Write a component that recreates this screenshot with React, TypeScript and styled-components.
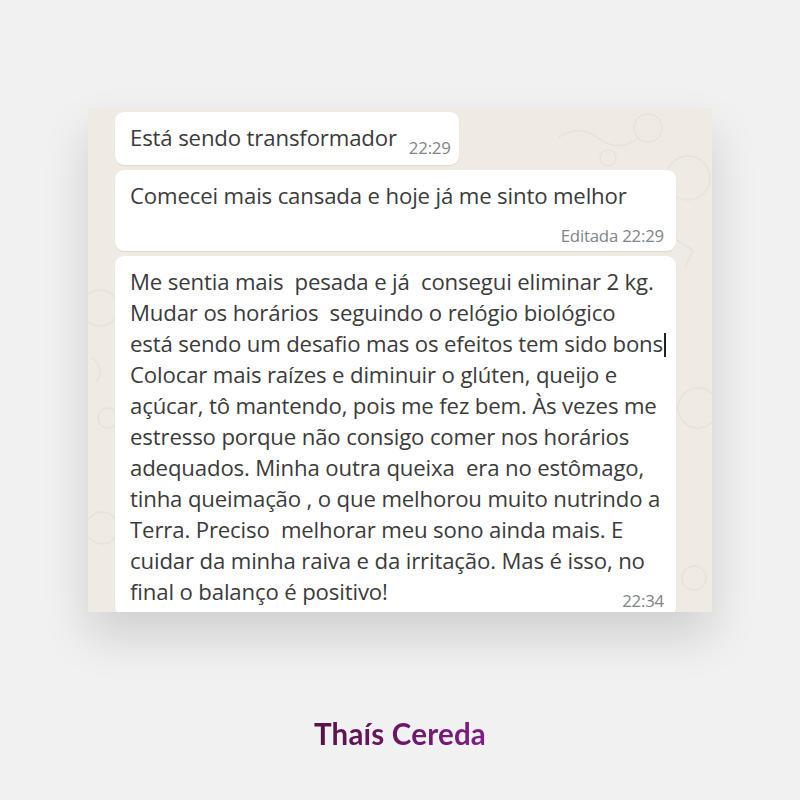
import styled, { createGlobalStyle } from "styled-components";

const GlobalStyle = createGlobalStyle`
  body {
    margin: 0;
    background: #f1f1f1;
  }
`;

const Page = styled.div`
  width: 800px;
  height: 800px;
  display: flex;
  flex-direction: column;
  align-items: center;
  padding-top: 108px;
  box-sizing: border-box;
`;

const ChatPanel = styled.div`
  position: relative;
  width: 624px;
  height: 504px;
  overflow: hidden;
  background: #efeae2;
  box-shadow: 0 24px 44px rgba(0, 0, 0, 0.14);
  box-sizing: border-box;
  padding: 4px 36px 0 27px;
  display: flex;
  flex-direction: column;
  gap: 5px;
`;

const Doodles = styled.svg`
  position: absolute;
  inset: 0;
  width: 100%;
  height: 100%;
  pointer-events: none;
`;

const Bubble = styled.div<{ $fit?: boolean }>`
  position: relative;
  align-self: ${(p) => (p.$fit ? "flex-start" : "stretch")};
  background: #ffffff;
  border-radius: 9px;
  box-shadow: 0 1px 1px rgba(0, 0, 0, 0.08);
  font-family: "Open Sans", "Noto Sans", sans-serif;
  color: #3b3b3b;
`;

const InlineBubble = styled(Bubble)`
  display: flex;
  align-items: flex-end;
  gap: 12px;
  padding: 10px 8px 8px 15px;
`;

const BlockBubble = styled(Bubble)`
  padding: 10px 12px 6px 15px;
`;

const MessageText = styled.p<{ $tail?: number }>`
  margin: 0 0 ${(p) => p.$tail ?? 0}px 0;
  font-size: 22.2px;
  line-height: 31px;
  letter-spacing: -0.15px;
  white-space: nowrap;
`;

const Meta = styled.div<{ $gapTop?: number }>`
  display: flex;
  justify-content: flex-end;
  margin-top: ${(p) => p.$gapTop ?? 0}px;
`;

const Time = styled.span`
  font-family: "Open Sans", "Noto Sans", sans-serif;
  font-size: 16.8px;
  line-height: 18px;
  letter-spacing: -0.2px;
  color: #808487;
  white-space: nowrap;
`;

const Caret = styled.span`
  display: inline-block;
  width: 1.5px;
  height: 24px;
  margin-left: 1px;
  background: #222;
  vertical-align: -5px;
`;

const Name = styled.h2`
  margin: 104px 0 0;
  font-family: Lato, "Open Sans", sans-serif;
  font-weight: 700;
  font-size: 29.5px;
  letter-spacing: 0.2px;
  background: linear-gradient(90deg, #561248 0%, #801c8a 100%);
  -webkit-background-clip: text;
  background-clip: text;
  color: transparent;
`;

const doodleSpots = [
  { x: 560, y: 20, r: 14 },
  { x: 600, y: 70, r: 22 },
  { x: 520, y: 50, r: 8 },
  { x: 12, y: 200, r: 18 },
  { x: 610, y: 300, r: 20 },
  { x: 14, y: 420, r: 16 },
  { x: 606, y: 470, r: 12 },
  { x: 20, y: 310, r: 10 },
];

const App = () => {
  return (
    <>
      <GlobalStyle />
      <Page>
        <ChatPanel>
          <Doodles viewBox="0 0 624 504" preserveAspectRatio="none">
            {doodleSpots.map((d, i) => (
              <circle
                key={i}
                cx={d.x}
                cy={d.y}
                r={d.r}
                fill="none"
                stroke="#e7e2d9"
                strokeWidth="1.5"
              />
            ))}
            <path d="M470 30 q20 -15 40 0 t40 0" fill="none" stroke="#e7e2d9" strokeWidth="1.5" />
            <path d="M585 130 l20 12 l-8 18" fill="none" stroke="#e7e2d9" strokeWidth="1.5" />
            <path d="M4 250 q14 10 4 24" fill="none" stroke="#e7e2d9" strokeWidth="1.5" />
          </Doodles>

          <InlineBubble $fit>
            <MessageText $tail={4}>Está sendo transformador</MessageText>
            <Time>22:29</Time>
          </InlineBubble>

          <BlockBubble>
            <MessageText>Comecei mais cansada e hoje já me sinto melhor</MessageText>
            <Meta $gapTop={16}>
              <Time>Editada 22:29</Time>
            </Meta>
          </BlockBubble>

          <BlockBubble>
            <MessageText>
              Me sentia mais&nbsp; pesada e já&nbsp; consegui eliminar 2 kg.
              <br />
              Mudar os horários&nbsp; seguindo o relógio biológico
              <br />
              está sendo um desafio mas os efeitos tem sido bons
              <Caret />
              <br />
              Colocar mais raízes e diminuir o glúten, queijo e
              <br />
              açúcar, tô mantendo, pois me fez bem. Às vezes me
              <br />
              estresso porque não consigo comer nos horários
              <br />
              adequados. Minha outra queixa&nbsp; era no estômago,
              <br />
              tinha queimação , o que melhorou muito nutrindo a
              <br />
              Terra. Preciso&nbsp; melhorar meu sono ainda mais. E
              <br />
              cuidar da minha raiva e da irritação. Mas é isso, no
              <br />
              final o balanço é positivo!
            </MessageText>
            <Meta $gapTop={-15}>
              <Time>22:34</Time>
            </Meta>
          </BlockBubble>
        </ChatPanel>
        <Name>Thaís Cereda</Name>
      </Page>
    </>
  );
};

export default App;
